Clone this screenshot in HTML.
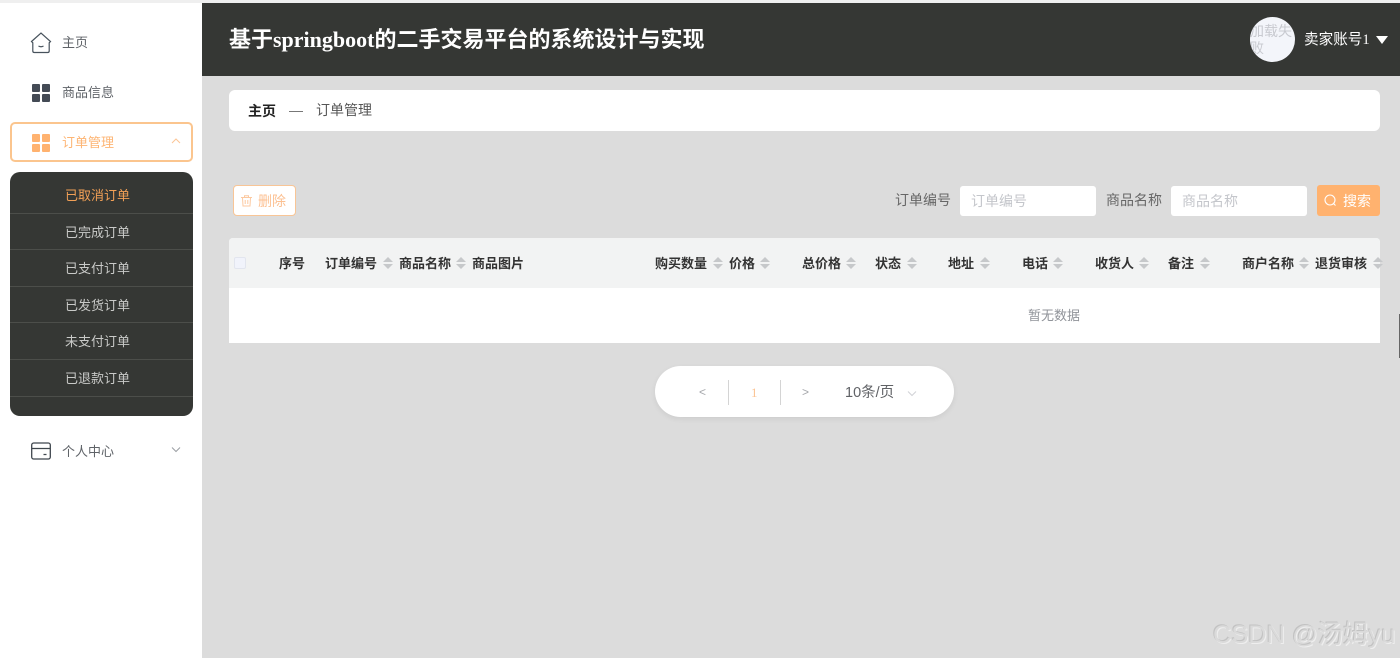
<!DOCTYPE html>
<html lang="zh"><head><meta charset="utf-8"><title>订单管理</title>
<style>
*{box-sizing:border-box}
html,body{margin:0;padding:0;width:1400px;height:658px;overflow:hidden;background:#dcdcdc;font-family:"Liberation Sans","Noto Sans CJK SC",sans-serif}
.a{position:absolute;white-space:nowrap}
.th{position:absolute;top:255px;font-size:13px;line-height:18px;font-weight:bold;color:#333;white-space:nowrap}
.sort{position:absolute;top:258px;width:0;height:0}
.sort:before,.sort:after{content:"";position:absolute;left:0;border-left:5px solid transparent;border-right:5px solid transparent}
.sort:before{top:-1px;border-bottom:5px solid #c6c8ca}
.sort:after{top:6px;border-top:5px solid #c6c8ca}
.sub{position:absolute;left:10px;width:183px;height:36.6px;border-bottom:1px solid #4c4e4a;color:#c9cac8;font-size:13px;text-align:center;line-height:38px;padding-right:8px}
</style></head><body>
<div class="a" style="left:0;top:0;width:1400px;height:3px;background:#efefef"></div>
<div class="a" style="left:0;top:3px;width:202px;height:655px;background:#fff"></div>
<div class="a" style="left:202px;top:3px;width:1198px;height:73px;background:#353734"></div>

<!-- sidebar -->
<svg class="a" style="left:30px;top:31px" width="22" height="23" viewBox="0 0 22 23" fill="none"><path d="M1.500 10.500 11 2l9.500 8.500-1.300 1.300v8.200q0 1.500-1.500 1.500H4.300q-1.500 0-1.500-1.500v-8.200z" stroke="#47525c" stroke-width="1.200"/><path d="M8.500 15q2.500 1.500 5 0" stroke="#47525c" stroke-width="1.200"/></svg>
<div class="a" style="left:62px;top:34px;font-size:13px;line-height:18px;color:#5f6368">主页</div>
<svg class="a" style="left:32px;top:84px" width="18" height="18"><g fill="#444b55"><rect width="8" height="8" rx="1"/><rect x="10" width="8" height="8" rx="1"/><rect y="10" width="8" height="8" rx="1"/><rect x="10" y="10" width="8" height="8" rx="1"/></g></svg>
<div class="a" style="left:62px;top:84px;font-size:13px;line-height:18px;color:#5f6368">商品信息</div>
<div class="a" style="left:10px;top:122px;width:183px;height:40px;border:2px solid #fbc58e;border-radius:5px"></div>
<svg class="a" style="left:32px;top:134px" width="18" height="18"><g fill="#ffb26f"><rect width="8" height="8" rx="1"/><rect x="10" width="8" height="8" rx="1"/><rect y="10" width="8" height="8" rx="1"/><rect x="10" y="10" width="8" height="8" rx="1"/></g></svg>
<div class="a" style="left:62px;top:134px;font-size:13px;line-height:18px;color:#fdb574">订单管理</div>
<svg class="a" style="left:171px;top:138px" width="10" height="7" fill="none"><path d="M1 5l4-4 4 4" stroke="#fcc596"/></svg>

<div class="a" style="left:10px;top:172px;width:183px;height:244px;background:#353734;border-radius:10px"></div>
<div class="sub" style="top:177px;color:#f2a056">已取消订单</div>
<div class="sub" style="top:213.600px">已完成订单</div>
<div class="sub" style="top:250.200px">已支付订单</div>
<div class="sub" style="top:286.800px">已发货订单</div>
<div class="sub" style="top:323.400px">未支付订单</div>
<div class="sub" style="top:360px">已退款订单</div>

<svg class="a" style="left:31px;top:442px" width="20" height="18" fill="none"><rect x=".7" y="1" width="18.600" height="16" rx="2" stroke="#3f464d" stroke-width="1.300"/><path d="M1 6.500h18M12.500 12.500h3" stroke="#3f464d" stroke-width="1.300"/></svg>
<div class="a" style="left:62px;top:443px;font-size:13px;line-height:18px;color:#5f6368">个人中心</div>
<svg class="a" style="left:171px;top:446px" width="10" height="7" fill="none"><path d="M1 1.500l4 4 4-4" stroke="#9a9ea3"/></svg>

<!-- header -->
<div class="a" style="left:229px;top:26px;font-family:'Liberation Serif','Noto Sans CJK SC',serif;font-size:22px;line-height:28px;font-weight:bold;color:#fff">基于springboot的二手交易平台的系统设计与实现</div>
<div class="a" style="left:1250px;top:17px;width:45px;height:45px;border-radius:50%;background:#f3f5fa;overflow:hidden;white-space:normal;font-family:'Liberation Serif','Noto Sans CJK SC',serif;font-size:14px;line-height:17px;color:#c8cad0;padding-top:7px;word-break:break-all">加载失败</div>
<div class="a" style="left:1304px;top:30px;font-family:'Liberation Serif','Noto Sans CJK SC',serif;font-size:14.600px;line-height:20px;color:#fff">卖家账号1</div>
<div class="a" style="left:1376px;top:36px;width:0;height:0;border-left:6px solid transparent;border-right:6px solid transparent;border-top:8px solid #fff"></div>

<!-- breadcrumb -->
<div class="a" style="left:229px;top:90px;width:1151px;height:41px;background:#fff;border-radius:6px"></div>
<div class="a" style="left:248px;top:101px;font-size:14px;line-height:20px;font-weight:bold;color:#222">主页</div>
<div class="a" style="left:289px;top:111px;width:14px;height:1px;background:#777"></div>
<div class="a" style="left:316px;top:100px;font-size:14px;line-height:20px;color:#555">订单管理</div>

<!-- toolbar -->
<div class="a" style="left:233px;top:185px;width:63px;height:31px;background:#fff;border:1px solid #f8c596;border-radius:4px"></div>
<svg class="a" style="left:241px;top:195px" width="11" height="12" fill="none" stroke="#fcc9a0"><path d="M0 2.500h11M3.500 2.500V.8h4v1.700M1.500 2.500l.5 8.500h7l.5-8.500M4.200 5v4M6.800 5v4"/></svg>
<div class="a" style="left:258px;top:191px;font-size:14px;line-height:20px;color:#fcc091">删除</div>

<div class="a" style="left:895px;top:191px;font-size:14px;line-height:18px;color:#666">订单编号</div>
<div class="a" style="left:960px;top:186px;width:136px;height:30px;background:#fff;border-radius:3px"></div>
<div class="a" style="left:971px;top:191px;font-size:14px;line-height:20px;color:#c4c6cb">订单编号</div>
<div class="a" style="left:1106px;top:191px;font-size:14px;line-height:18px;color:#666">商品名称</div>
<div class="a" style="left:1171px;top:186px;width:136px;height:30px;background:#fff;border-radius:3px"></div>
<div class="a" style="left:1182px;top:191px;font-size:14px;line-height:20px;color:#c4c6cb">商品名称</div>
<div class="a" style="left:1317px;top:185px;width:63px;height:31px;background:#ffb26f;border-radius:3px"></div>
<svg class="a" style="left:1324px;top:194px" width="13" height="13" fill="none" stroke="#fff" stroke-width="1.100"><circle cx="6" cy="6" r="5"/><path d="M9.500 9.500l2 2"/></svg>
<div class="a" style="left:1343px;top:191px;font-size:14px;line-height:20px;color:#fff">搜索</div>

<!-- table -->
<div class="a" style="left:229px;top:238px;width:1151px;height:105px;background:#fff;border-radius:4px 4px 0 0;overflow:hidden"><div style="height:50px;background:#f2f3f3"></div></div>
<div class="a" style="left:234px;top:257px;width:12px;height:12px;background:#f1f3fb;border:1px solid #e2e5ee;border-radius:2px"></div>
<div class="th" style="left:279px">序号</div>
<div class="th" style="left:325px">订单编号</div><div class="sort" style="left:383px"></div>
<div class="th" style="left:399px">商品名称</div><div class="sort" style="left:456px"></div>
<div class="th" style="left:472px">商品图片</div>
<div class="th" style="left:655px">购买数量</div><div class="sort" style="left:713px"></div>
<div class="th" style="left:729px">价格</div><div class="sort" style="left:760px"></div>
<div class="th" style="left:802px">总价格</div><div class="sort" style="left:846px"></div>
<div class="th" style="left:875px">状态</div><div class="sort" style="left:907px"></div>
<div class="th" style="left:948px">地址</div><div class="sort" style="left:980px"></div>
<div class="th" style="left:1022px">电话</div><div class="sort" style="left:1053px"></div>
<div class="th" style="left:1095px">收货人</div><div class="sort" style="left:1139px"></div>
<div class="th" style="left:1168px">备注</div><div class="sort" style="left:1200px"></div>
<div class="th" style="left:1242px">商户名称</div><div class="sort" style="left:1299px"></div>
<div class="th" style="left:1315px">退货审核</div><div class="sort" style="left:1373px"></div>
<div class="a" style="left:1028px;top:307px;font-size:13px;line-height:18px;color:#909399">暂无数据</div>

<!-- pager -->
<div class="a" style="left:655px;top:366px;width:299px;height:51px;background:#fff;border-radius:26px;box-shadow:0 2px 6px rgba(0,0,0,.07)"></div>
<div class="a" style="left:699px;top:385px;font-size:12px;line-height:14px;color:#a5a7ab">&lt;</div>
<div class="a" style="left:728px;top:380px;width:1px;height:25px;background:#d4d4d4"></div>
<div class="a" style="left:751px;top:385px;font-family:'Liberation Serif',serif;font-size:13px;line-height:16px;color:#fbc494">1</div>
<div class="a" style="left:780px;top:380px;width:1px;height:25px;background:#d4d4d4"></div>
<div class="a" style="left:802px;top:385px;font-size:12px;line-height:14px;color:#a5a7ab">&gt;</div>
<div class="a" style="left:845px;top:384px;font-size:14.500px;line-height:18px;color:#606266">10条/页</div>
<svg class="a" style="left:907px;top:390px" width="10" height="7" fill="none"><path d="M1 1.500l4 4 4-4" stroke="#d0d2d6"/></svg>

<!-- scrollbar sliver -->
<div class="a" style="left:1399px;top:314px;width:1px;height:44px;background:#666"></div>

<!-- watermark -->
<div class="a" style="left:1213px;top:618px;font-size:25.400px;line-height:34px;color:#dadada;text-shadow:-1px -1px 0 #c2c2c2,1px 1px 0 #eeeeee">CSDN @汤姆yu</div>
</body></html>
